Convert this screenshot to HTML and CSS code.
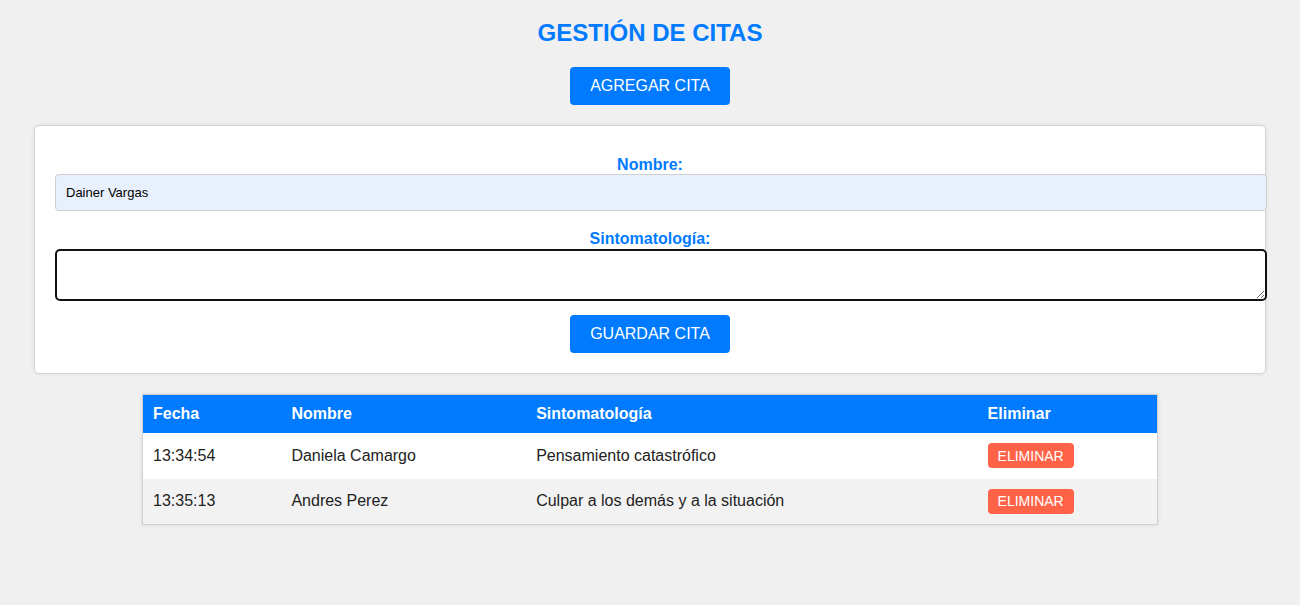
FILE: index.html
```html
<!DOCTYPE html>
<html lang="es">
<head>
<meta charset="utf-8">
<title>Gestión de Citas</title>
<link rel="stylesheet" href="styles.css">
</head>
<body>
<div class="page">
  <h1 class="title">GESTIÓN DE CITAS</h1>
  <div class="center">
    <button class="btn" type="button">AGREGAR CITA</button>
  </div>
  <form class="card">
    <label class="label" for="nombre">Nombre:</label>
    <input class="field" id="nombre" type="text" value="Dainer Vargas">
    <label class="label label-second" for="sinto">Sintomatología:</label>
    <textarea class="field area" id="sinto"></textarea>
    <div class="center">
      <button class="btn" type="button">GUARDAR CITA</button>
    </div>
  </form>
  <table class="table">
    <colgroup>
      <col class="c1"><col class="c2"><col class="c3"><col class="c4">
    </colgroup>
    <thead>
      <tr><th>Fecha</th><th>Nombre</th><th>Sintomatología</th><th>Eliminar</th></tr>
    </thead>
    <tbody>
      <tr><td>13:34:54</td><td>Daniela Camargo</td><td>Pensamiento catastrófico</td><td><button class="del" type="button">ELIMINAR</button></td></tr>
      <tr class="alt"><td>13:35:13</td><td>Andres Perez</td><td>Culpar a los demás y a la situación</td><td><button class="del" type="button">ELIMINAR</button></td></tr>
    </tbody>
  </table>
</div>
</body>
</html>
```

FILE: styles.css
```css
* { box-sizing: border-box; }
html, body {
  margin: 0;
  padding: 0;
  background: #f0f0f0;
  font-family: "Liberation Sans", Arial, sans-serif;
}
.page {
  padding: 19px 34px 20px;
}
.title {
  margin: 0 0 20px;
  text-align: center;
  color: #007bff;
  font-size: 24px;
  line-height: 28px;
  font-weight: bold;
}
.center {
  display: flex;
  justify-content: center;
}
.btn {
  background: #007bff;
  color: #fff;
  border: none;
  border-radius: 4px;
  width: 160px;
  height: 38px;
  font-family: "Liberation Sans", Arial, sans-serif;
  font-size: 16px;
  padding: 0;
}
.card {
  margin: 20px 0 20px;
  background: #fff;
  border: 1px solid #d4d4d4;
  border-radius: 5px;
  box-shadow: 0 0 5px rgba(0,0,0,0.08);
  padding: 20px;
  display: flex;
  flex-direction: column;
}
.label {
  display: block;
  text-align: center;
  color: #007bff;
  font-weight: bold;
  font-size: 16px;
  line-height: 18px;
  margin-top: 10px;
}
.label-second {
  margin-top: 19px;
}
.field {
  display: block;
  width: calc(100% + 22px);
  margin: 0;
  font-family: "Liberation Sans", Arial, sans-serif;
  font-size: 13px;
  color: #000;
}
input.field {
  height: 37px;
  margin-top: 0;
  padding: 0 10px;
  background: #e8f0fe;
  border: 1px solid #cfcfcf;
  border-radius: 4px;
}
.area {
  height: 52px;
  margin-top: 1px;
  margin-bottom: 14px;
  border: 2px solid #111;
  border-radius: 5px;
  background: #fff;
  padding: 10px;
  resize: vertical;
}
.table {
  width: 1016px;
  margin: 0 auto;
  border-collapse: collapse;
  background: #fff;
  border: 1px solid #cfcfcf;
  box-shadow: 0 0 5px rgba(0,0,0,0.08);
  font-size: 16px;
}
.c1 { width: 139px; }
.c2 { width: 245px; }
.c3 { width: 452px; }
.c4 { width: 180px; }
.table th {
  background: #007bff;
  color: #fff;
  text-align: left;
  font-weight: bold;
  height: 38px;
  padding: 0 10px;
}
.table td {
  height: 46px;
  padding: 0 10px;
  color: #222;
  vertical-align: middle;
}
.table tr.alt td { background: #f2f2f2; }
.del {
  background: #ff6347;
  color: #fff;
  border: none;
  border-radius: 4px;
  font-family: "Liberation Sans", Arial, sans-serif;
  font-size: 14px;
  height: 25px;
  padding: 0 10px;
  display: block;
}
```
